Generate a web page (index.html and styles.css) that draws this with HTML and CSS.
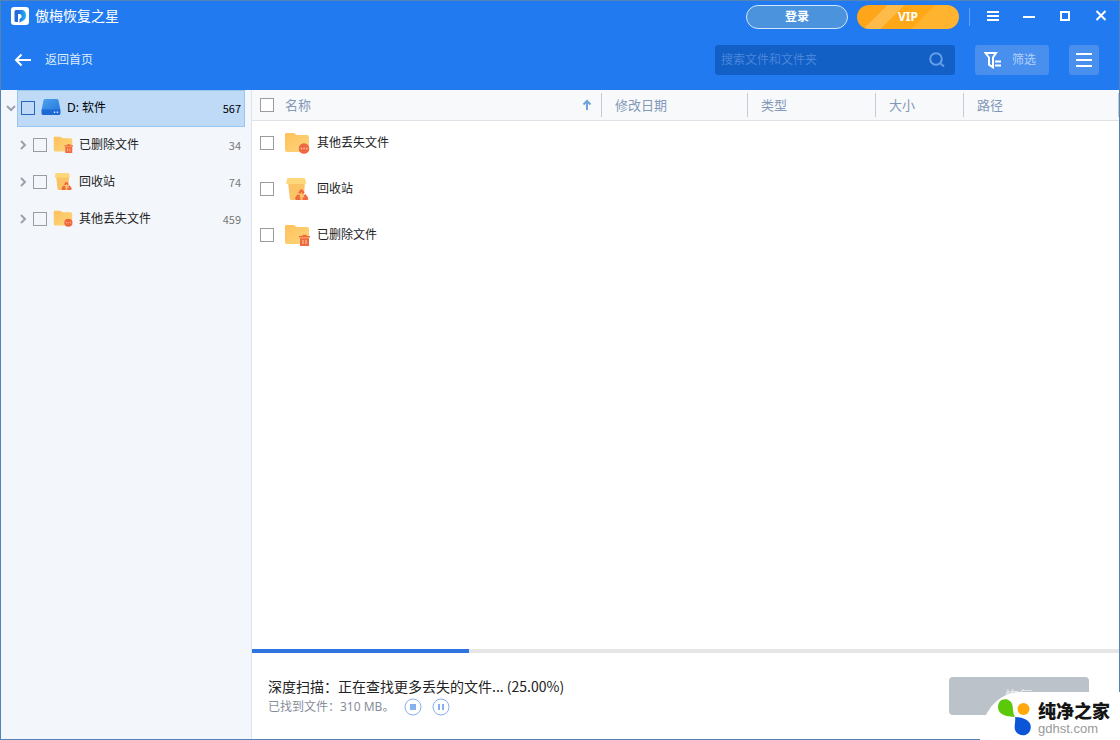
FILE: index.html
```html
<!DOCTYPE html>
<html lang="zh-CN">
<head>
<meta charset="utf-8">
<title>傲梅恢复之星</title>
<link rel="stylesheet" href="styles.css">
</head>
<body>
<svg class="defs" aria-hidden="true">
  <defs>
    <linearGradient id="g-folder" x1="0" y1="0" x2="1" y2="1"><stop offset="0" stop-color="#ffc05c"/><stop offset="1" stop-color="#fbd77c"/></linearGradient>
    <linearGradient id="g-drive" x1="0" y1="0" x2="1" y2="1"><stop offset="0" stop-color="#4ba3ef"/><stop offset="1" stop-color="#2878dc"/></linearGradient>
    <linearGradient id="g-logo" x1="0" y1="0" x2="1" y2="0"><stop offset="0" stop-color="#2468dd"/><stop offset="1" stop-color="#20b4f5"/></linearGradient>
  </defs>
  <symbol id="folder" viewBox="0 0 26 22">
    <path fill="url(#g-folder)" d="M2 1h7.500q1 0 1.600.8L12.300 3H23q2 0 2 2v13q0 2-2 2H3q-2 0-2-2V2q0-1 1-1z"/>
  </symbol>
  <symbol id="folder-lost" viewBox="0 0 26 22">
    <use href="#folder" width="26" height="22"/>
    <circle cx="20" cy="16.500" r="5.300" fill="#ef683f"/>
    <path stroke="#ffc9a5" stroke-width="1.500" stroke-dasharray="1.500 1.200" d="M16.600 16.500h7"/>
  </symbol>
  <symbol id="folder-deleted" viewBox="0 0 26 22">
    <use href="#folder" width="26" height="22"/>
    <path fill="#ef683f" d="M15 12h3.500v-1.200h4V12H26v1.500H15zM16 14.300h9V22h-9z"/>
    <path stroke="#ffd0a8" d="M19 16v4M22 16v4"/>
  </symbol>
  <symbol id="recycle" viewBox="0 0 26 22">
    <path fill="#fbc365" d="M4 4h17l-1.500 18h-12q-1.500 0-1.700-1.500z"/>
    <path fill="#fcd77c" d="M4 0h16q1 0 1.200 1l.8 4q.2 1-.8 1H3q-1 0-.8-1L3 1q.2-1 1-1z"/>
    <path fill="#ef683f" d="M16.300 11.500h2.400l1.900 3.300-2 1.200-1.100-2-1.200 2-2-1.200zM13.300 16.500l3 .8-.9 1.900h1V22h-4q-2-.4-1-2.400zM21.600 15.900l2.600 4q.6 1.700-1 2.100h-4.600v-2.800h1.900l-1-1.700z"/>
  </symbol>
</svg>

<div class="window">
  <header class="header">
    <div class="titlebar">
      <svg class="logo" viewBox="0 0 18 18" aria-hidden="true"><rect width="18" height="18" rx="3" fill="#fff"/><path fill="#2468dd" d="M3.500 4.500Q3.500 3 5 3h2v12H5q-1.500 0-1.500-1.500z"/><path fill="url(#g-logo)" d="M7 3h3.500Q15 3 15 8.500q0 4-3.500 5.500L8.500 15.500V12l2-1.500Q11 7 8.500 7H7z"/></svg>
      <h1 class="app-name">傲梅恢复之星</h1>
      <button class="pill login">登录</button>
      <button class="pill vip">VIP</button>
      <span class="divider"></span>
      <div class="controls">
        <button aria-label="菜单"><svg viewBox="0 0 16 16"><path d="M2 3h12M2 7h12M2 11h12"/></svg></button>
        <button aria-label="最小化"><svg viewBox="0 0 16 16"><path d="M2 8h12"/></svg></button>
        <button aria-label="最大化"><svg viewBox="0 0 16 16"><path d="M4 3h8v8H4z"/></svg></button>
        <button aria-label="关闭"><svg viewBox="0 0 16 16"><path d="M3.500 2l9 9M12.500 2l-9 9"/></svg></button>
      </div>
    </div>
    <div class="toolbar">
      <button class="back"><svg viewBox="0 0 18 14" aria-hidden="true"><path d="M17 7H2M7.500 1.500L2 7l5.500 5.500"/></svg>返回首页</button>
      <div class="search">
        <input type="text" aria-label="搜索文件和文件夹" placeholder="搜索文件和文件夹">
        <svg viewBox="0 0 16 16" aria-hidden="true"><circle cx="7" cy="7" r="5.800"/><path d="M11.300 11.300l3.700 3.200"/></svg>
      </div>
      <button class="tool filter"><svg viewBox="0 0 18 18" aria-hidden="true"><path d="M1.500 2h10.500L9 6.500v9.800l-4-2.600V6.500z"/><path d="M11 10.500h6M11 14.500h6"/></svg>筛选</button>
      <button class="tool view" aria-label="视图"><svg viewBox="0 0 16 16"><path d="M0 2h16M0 8h16M0 14h16"/></svg></button>
    </div>
  </header>

  <div class="body">
    <nav class="sidebar">
      <ul class="tree">
        <li class="root">
          <button class="toggle" aria-label="折叠"><svg viewBox="0 0 10 10"><path d="M1 3l4 4 4-4"/></svg></button>
          <label class="node selected"><input type="checkbox"><svg class="tree-icon" viewBox="0 0 20 18"><path fill="url(#g-drive)" d="M4 0h12q1.500 0 2 1.500l2 10.500H0L2 1.500Q2.500 0 4 0z"/><path fill="#1c68d4" d="M0 11h20v4q0 2-2 2H2q-2 0-2-2z"/><path stroke="#d7ecff" stroke-width="1.500" d="M13 14h1.500M16 14h1.500"/></svg><span class="name">D: 软件</span><span class="count">567</span></label>
        </li>
        <li>
          <button class="toggle" aria-label="展开"><svg viewBox="0 0 10 10"><path d="M3 1l4 4-4 4"/></svg></button>
          <label class="node"><input type="checkbox"><svg class="tree-icon"><use href="#folder-deleted"/></svg><span class="name">已删除文件</span><span class="count">34</span></label>
        </li>
        <li>
          <button class="toggle" aria-label="展开"><svg viewBox="0 0 10 10"><path d="M3 1l4 4-4 4"/></svg></button>
          <label class="node"><input type="checkbox"><svg class="tree-icon"><use href="#recycle"/></svg><span class="name">回收站</span><span class="count">74</span></label>
        </li>
        <li>
          <button class="toggle" aria-label="展开"><svg viewBox="0 0 10 10"><path d="M3 1l4 4-4 4"/></svg></button>
          <label class="node"><input type="checkbox"><svg class="tree-icon"><use href="#folder-lost"/></svg><span class="name">其他丢失文件</span><span class="count">459</span></label>
        </li>
      </ul>
    </nav>

    <main class="main">
      <div class="list">
        <table class="files">
          <colgroup><col class="c-name"><col class="c-date"><col class="c-type"><col class="c-size"><col></colgroup>
          <thead>
            <tr>
              <th><div class="head-name"><label><input type="checkbox">名称</label><svg viewBox="0 0 10 12" aria-hidden="true"><path d="M5 11V2M1.500 5.500L5 2l3.500 3.500"/></svg></div></th>
              <th>修改日期</th><th>类型</th><th>大小</th><th>路径</th>
            </tr>
          </thead>
          <tbody>
            <tr><td><label class="file"><input type="checkbox"><svg><use href="#folder-lost"/></svg>其他丢失文件</label></td><td></td><td></td><td></td><td></td></tr>
            <tr><td><label class="file"><input type="checkbox"><svg><use href="#recycle"/></svg>回收站</label></td><td></td><td></td><td></td><td></td></tr>
            <tr><td><label class="file"><input type="checkbox"><svg><use href="#folder-deleted"/></svg>已删除文件</label></td><td></td><td></td><td></td><td></td></tr>
          </tbody>
        </table>
      </div>
      <div class="progress"><div class="progress-bar" style="width:25%"></div></div>
      <footer class="status">
        <div class="status-text">
          <p class="scan">深度扫描：正在查找更多丢失的文件... (25.00%)</p>
          <div class="found">
            <span>已找到文件：310 MB。</span>
            <button aria-label="停止"><svg viewBox="0 0 18 18"><circle cx="9" cy="9" r="8"/><path class="solid" d="M6 6h6v6H6z"/></svg></button>
            <button aria-label="暂停"><svg viewBox="0 0 18 18"><circle cx="9" cy="9" r="8"/><path d="M7 6v6M11 6v6"/></svg></button>
          </div>
        </div>
        <button class="recover" disabled>恢复</button>
      </footer>
    </main>
  </div>
</div>

<aside class="watermark">
  <svg class="wm-mark" viewBox="0 0 34 37" aria-hidden="true"><path fill="#5cc80a" d="M18 18C12 17.500 5 17 2 12 0 8 1 3 5 .8 9-1 14 1 15.300 5.500 16.300 9.500 15.500 13.500 18 18z"/><circle cx="26.500" cy="10" r="6" fill="#ffa90a"/><path fill="#0b56d8" d="M18 18c6 .5 12 1.500 15 6.500 2 4.500 0 9.500-4 11.300-4.500 1.700-9.500-.5-11-5C16.800 26.500 19 22.500 18 18z"/></svg>
  <div class="wm-text"><strong>纯净之家</strong><span>gdhst.com</span></div>
</aside>
</body>
</html>
```

FILE: styles.css
```css
* { box-sizing: border-box; }

body {
  margin: 0;
  font: 12px/18px "Noto Sans", "Noto Sans CJK SC", sans-serif;
  color: #222;
}

button {
  margin: 0;
  padding: 0;
  border: 0;
  background: none;
  font: inherit;
  color: inherit;
}

svg {
  display: block;
  flex: none;
  fill: none;
}

.defs { position: absolute; width: 0; height: 0; }

input[type="checkbox"] {
  appearance: none;
  flex: none;
  width: 14px;
  height: 14px;
  margin: 0;
  border: 1px solid #9a9ca0;
  background: #fff;
}

.window {
  display: flex;
  flex-direction: column;
  height: 100vh;
  border: 1px solid #5483b6;
  background: #fff;
}

/* Header */
.header {
  background: #217aef;
  color: #fff;
}

.titlebar {
  display: flex;
  align-items: center;
  height: 31px;
  padding-left: 10px;
}

.logo {
  width: 18px;
  height: 18px;
  margin-bottom: 2px;
}

.app-name {
  flex: 1;
  margin: 0 0 2px 6px;
  font-size: 14px;
  font-weight: 400;
}

.pill {
  width: 102px;
  height: 24px;
  border-radius: 12px;
  font-weight: 700;
}

.login {
  margin-right: 9px;
  border: 1px solid #d2e6fb;
  background: #4b94dd;
}

.vip {
  background: linear-gradient(135deg, #ffa51a 0 24%, #ffbb49 24% 38%, #ffa817 38% 62%, #ffb32e 62% 100%);
}

.divider {
  width: 1px;
  height: 18px;
  margin: 0 5px 0 10px;
  background: #5f9ff5;
}

.controls { display: flex; }

.controls button {
  display: grid;
  place-items: center;
  width: 36px;
  height: 30px;
}

.controls svg {
  width: 16px;
  height: 16px;
  stroke: #fff;
  stroke-width: 2;
}

.toolbar {
  display: flex;
  align-items: center;
  height: 58px;
  padding: 0 20px 2px 13px;
}

.back {
  display: flex;
  align-items: center;
  gap: 13px;
  margin-right: auto;
  color: #dfecff;
}

.back svg {
  width: 18px;
  height: 14px;
  stroke: #fff;
  stroke-width: 2;
}

.search {
  display: flex;
  align-items: center;
  width: 240px;
  height: 30px;
  padding: 0 10px 0 6px;
  border-radius: 3px;
  background: #125fc6;
}

.search input {
  flex: 1;
  min-width: 0;
  padding: 0;
  border: 0;
  outline: 0;
  background: none;
  font: inherit;
  color: #fff;
}

.search input::placeholder { color: #4a86da; }

.search svg {
  width: 16px;
  height: 16px;
  stroke: #659fe9;
  stroke-width: 2;
}

.tool {
  display: flex;
  align-items: center;
  justify-content: center;
  height: 30px;
  margin-left: 20px;
  border-radius: 3px;
  background: #488fee;
}

.tool svg { stroke: #fff; stroke-width: 2; }

.filter {
  gap: 10px;
  width: 74px;
  padding-right: 4px;
  color: #b4d2fb;
}

.filter svg { width: 18px; height: 18px; }

.view { width: 30px; }

.view svg { width: 16px; height: 16px; }

/* Folder tree */
.body {
  display: flex;
  flex: 1;
  min-height: 0;
}

.sidebar {
  flex: none;
  width: 251px;
  padding-right: 6px;
  border-right: 1px solid #dce3ee;
  background: #f3f7fc;
}

.tree {
  margin: 0;
  padding: 0;
  list-style: none;
}

.tree li {
  display: flex;
  height: 37px;
  padding-left: 12px;
}

.tree .root { padding-left: 0; }

.toggle {
  display: grid;
  place-items: center;
  width: 16px;
  padding: 0 0 2px 3px;
}

.toggle svg {
  width: 10px;
  height: 10px;
  stroke: #9ba2ac;
  stroke-width: 2;
}

.node {
  display: flex;
  flex: 1;
  align-items: center;
  gap: 6px;
  padding: 0 3px 2px;
  border: 1px solid transparent;
}

.node input[type="checkbox"] { background: none; }

.selected {
  border-color: #98c6ee;
  background: #bedaf7;
  color: #000;
}

.selected input[type="checkbox"] { border-color: #2868b8; }

.tree-icon { width: 20px; height: 17px; }

.name { flex: 1; }

.count {
  font-family: "Noto Sans CJK SC", sans-serif;
  font-size: 11px;
  color: #777;
}

.selected .count { color: #000; }

/* File list */
.main {
  display: flex;
  flex: 1;
  flex-direction: column;
  min-width: 0;
}

.list { flex: 1; }

.files {
  width: 100%;
  border-collapse: collapse;
  table-layout: fixed;
}

.c-name { width: 350px; }
.c-date { width: 146px; }
.c-type { width: 128px; }
.c-size { width: 88px; }

.files th {
  height: 30px;
  padding: 0 0 0 13px;
  border-bottom: 1px solid #dfe3e8;
  background: linear-gradient(#c3cbdb, #c3cbdb) right center / 1px 24px no-repeat #f8f9fb;
  font-size: 13px;
  font-weight: 400;
  text-align: left;
  color: #8298b9;
}

.files th:first-child { padding: 0 10px 0 8px; }

.head-name {
  display: flex;
  align-items: center;
  justify-content: space-between;
}

.head-name label {
  display: flex;
  align-items: center;
  gap: 11px;
}

.head-name svg {
  width: 10px;
  height: 12px;
  stroke: #6fa3d8;
  stroke-width: 2;
}

.files td {
  height: 46px;
  padding: 0 0 0 8px;
}

.file {
  display: flex;
  align-items: center;
}

.file svg {
  width: 26px;
  height: 22px;
  margin: 0 7px 0 10px;
}

/* Scan status */
.progress {
  height: 4px;
  background: #e6e6e6;
}

.progress-bar {
  height: 4px;
  background: #2e75e0;
}

.status {
  display: flex;
  align-items: flex-start;
  justify-content: space-between;
  height: 86px;
  padding: 24px 30px 0 16px;
}

.scan {
  margin: 0;
  font-family: "Noto Sans CJK SC", sans-serif;
  font-size: 14px;
  line-height: 18px;
}

.found {
  display: flex;
  align-items: center;
  gap: 10px;
  height: 24px;
  color: #888e9b;
}

.found svg {
  width: 18px;
  height: 18px;
  stroke: #88afee;
  stroke-width: 2;
}

.found circle { stroke-width: 1; }

.found .solid { fill: #88afee; stroke: none; }

.recover {
  width: 140px;
  height: 38px;
  border-radius: 4px;
  background: #bcc2ca;
  font-size: 14px;
  color: #e8ebef;
}

/* Corner site mark */
.watermark {
  position: absolute;
  right: 0;
  bottom: 0;
  display: flex;
  align-items: flex-start;
  gap: 7px;
  width: 140px;
  height: 48px;
  padding: 7px 0 0 17px;
  border-radius: 40px 0 0 0 / 48px 0 0 0;
  background: #fff;
}

.wm-mark { width: 34px; height: 37px; }

.wm-text {
  display: flex;
  flex-direction: column;
}

.wm-text strong {
  font-size: 18px;
  font-weight: 900;
  line-height: 24px;
  color: #151515;
}

.wm-text span {
  font: 13px/12px "Liberation Sans", sans-serif;
  color: #999;
}
```
